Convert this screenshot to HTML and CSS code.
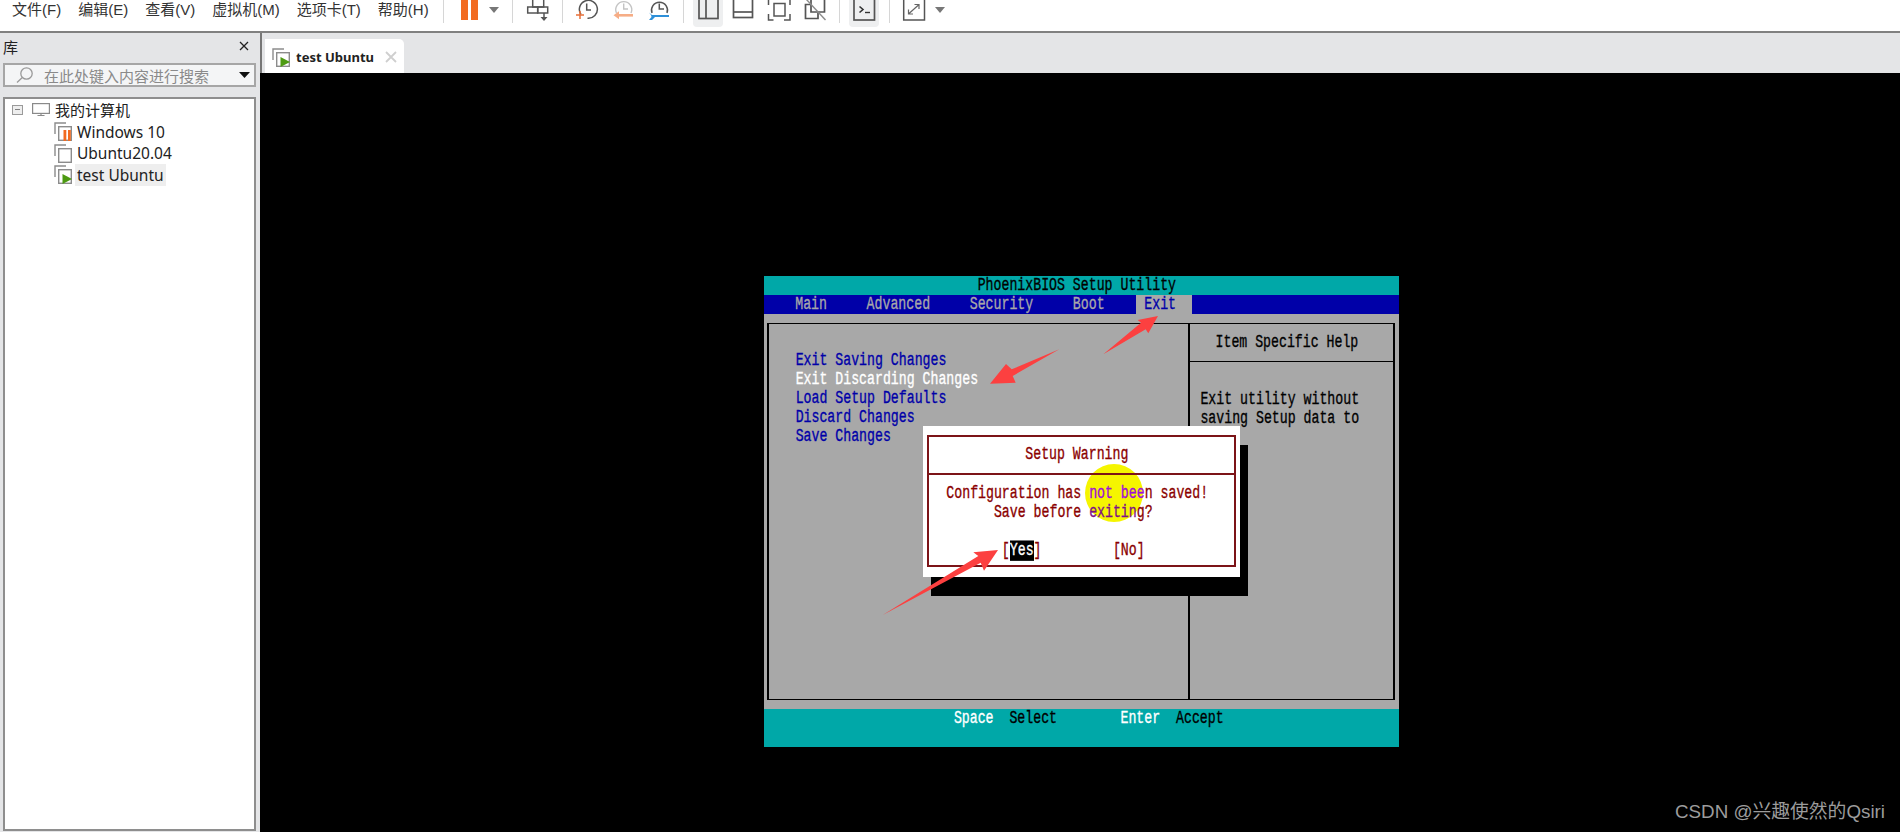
FILE: index.html
```html
<!DOCTYPE html>
<html lang="zh-CN">
<head>
<meta charset="utf-8">
<title>test Ubuntu</title>
<link rel="stylesheet" href="styles.css">
</head>
<body>
<svg class="defs" width="0" height="0" aria-hidden="true">
  <symbol id="vm" viewBox="0 0 18 19">
    <path d="M1 12V1h11" fill="none" stroke="#8c8c8c" stroke-width="1.4"/>
    <rect x="4.7" y="4.7" width="12.6" height="13.6" fill="#fff" stroke="#8c8c8c" stroke-width="1.4"/>
  </symbol>
</svg>
<div class="app">
  <header class="toolbar">
    <nav class="menu">
      <span>文件(F)</span><span>编辑(E)</span><span>查看(V)</span><span>虚拟机(M)</span><span>选项卡(T)</span><span>帮助(H)</span>
    </nav>
    <div class="tools">
      <i class="sep"></i>
      <svg class="ico ml14" viewBox="0 0 24 24"><rect x="3" y="-2" width="7" height="22" fill="#f26b21"/><rect x="13" y="-2" width="7" height="22" fill="#f26b21"/></svg>
      <svg class="caret ml7" viewBox="0 0 10 6"><path d="M0 0h10L5 6z" fill="#777"/></svg>
      <i class="sep ml13"></i>
      <svg class="ico ml13" viewBox="0 0 24 24" fill="none" stroke="#555" stroke-width="1.5"><rect x="6.7" y="-2" width="11" height="9"/><rect x="1.7" y="7" width="10" height="6"/><rect x="11.7" y="7" width="10" height="6"/><path d="M18 13v6"/><path d="M14.5 17h7L18 21z" fill="#555" stroke="none"/></svg>
      <i class="sep ml12"></i>
      <svg class="ico ml12" viewBox="0 0 24 24" fill="none" stroke="#555" stroke-width="1.5"><path d="M6 14.5A9 9 0 1 1 12.5 18.3"/><path d="M11.7 3.5V10H16"/><path d="M5 11v8M1 15h8" stroke="#e8703a"/></svg>
      <svg class="ico ml12" viewBox="0 0 24 24" fill="none" stroke="#c4c4c4" stroke-width="1.4"><path d="M5.5 13A8 8 0 1 1 20 13"/><path d="M12.7 3.5V9H17"/><path d="M22 15.3H6" stroke="#f6ad86" stroke-width="2.6"/><path d="M8 11.3 2.5 15.3 8 19.3z" fill="#f6ad86" stroke="none"/></svg>
      <svg class="ico ml12" viewBox="0 0 24 24" fill="none" stroke="#555" stroke-width="1.5"><path d="M5 13A8 8 0 1 1 20 13"/><path d="M12.3 3.5V9H17"/><path d="M2 12.5l3 2.5h17v2H8l-3 3H2l2.5-3-.5-2z" fill="#2e90d9" stroke="none"/></svg>
      <i class="sep ml12"></i>
      <span class="active ml9"><svg class="ico" viewBox="0 0 24 24" fill="none" stroke="#555" stroke-width="1.7"><rect x="3" y="-3" width="19" height="21.5" fill="#eeeff0"/><path d="M10 -3V18.5"/></svg></span>
      <svg class="ico ml8" viewBox="0 0 24 24" fill="none" stroke="#555" stroke-width="1.7"><rect x="2.5" y="-3" width="19" height="20.5"/><path d="M2.5 12h19"/></svg>
      <svg class="ico ml12" viewBox="0 0 24 24" fill="none" stroke="#555" stroke-width="1.5"><rect x="7" y="3.5" width="11" height="12.5"/><path d="M1.5 5V-1h5M17 -1h6V5M1.5 14v6h5M17 20h6v-6"/></svg>
      <svg class="ico ml12" viewBox="0 0 24 24" fill="none" stroke="#555" stroke-width="1.7"><path d="M7.5 4.5H2.5V18.5H15V13"/><path d="M8 -1H21.5V12H8z"/><path d="M3 -1 22.5 20" stroke="#8c8c8c" stroke-width="1.4"/></svg>
      <i class="sep ml12"></i>
      <span class="active ml9"><svg class="ico" viewBox="0 0 24 24" fill="none" stroke="#555" stroke-width="1.7"><rect x="2" y="-3" width="20.5" height="23" fill="#eeeff0"/><path d="M7.5 6.5 11 9.5 7.5 12.5" stroke="#333" stroke-width="1.6"/><path d="M13 12.5h5" stroke="#333" stroke-width="1.4"/></svg></span>
      <i class="sep ml10"></i>
      <svg class="ico ml12" viewBox="0 0 24 24" fill="none" stroke="#555" stroke-width="1.5"><rect x="1.7" y="-2" width="20.8" height="22"/><path d="M7 13.5 16.5 5M12.5 4.5h4.500v4.500M6.500 9.500v4.500h4.500" stroke="#666" stroke-width="1.2"/></svg>
      <svg class="caret ml9" viewBox="0 0 10 6"><path d="M0 0h10L5 6z" fill="#777"/></svg>
    </div>
  </header>

  <div class="workspace">
    <aside class="library">
      <div class="lib-head">
        <span>库</span>
        <svg class="lib-close" viewBox="0 0 10 10"><path d="M1 1l8 8M9 1l-8 8" stroke="#222" stroke-width="1.3"/></svg>
      </div>
      <div class="search">
        <svg class="search-ico" viewBox="0 0 18 16" fill="none" stroke="#9a9a9a" stroke-width="1.3"><circle cx="10.500" cy="6.500" r="5.700"/><path d="M6.300 10.500 1 15.500"/></svg>
        <span class="search-text">在此处键入内容进行搜索</span>
        <svg class="search-drop" viewBox="0 0 11 6"><path d="M0 0h11L5.500 6z" fill="#111"/></svg>
      </div>
      <div class="tree">
        <div class="node root">
          <span class="expander"></span>
          <svg class="monitor" viewBox="0 0 18 13" fill="none" stroke="#8a8a8a" stroke-width="1.200"><rect x=".6" y=".6" width="16.800" height="9.800"/><path d="M9 10.500v2M5.500 12.500h7"/></svg>
          <span>我的计算机</span>
        </div>
        <div class="node">
          <svg class="vm-ico" viewBox="0 0 18 19"><use href="#vm"/><rect x="9.500" y="8" width="2.800" height="11" fill="#f26b21"/><rect x="14" y="8" width="2.800" height="11" fill="#f26b21"/></svg>
          <span class="label">Windows 10</span>
        </div>
        <div class="node">
          <svg class="vm-ico" viewBox="0 0 18 19"><use href="#vm"/></svg>
          <span class="label">Ubuntu20.04</span>
        </div>
        <div class="node">
          <svg class="vm-ico" viewBox="0 0 18 19"><use href="#vm"/><path d="M8.500 9v10L18 14z" fill="#4d9a12"/></svg>
          <span class="label selected">test Ubuntu</span>
        </div>
      </div>
    </aside>

    <main class="main">
      <div class="tabstrip">
        <div class="tab">
          <svg class="vm-ico" viewBox="0 0 18 19"><use href="#vm"/><path d="M8.500 9v10L18 14z" fill="#4d9a12"/></svg>
          <span class="tab-title">test Ubuntu</span>
          <svg class="tab-close" viewBox="0 0 12 12"><path d="M1 1l10 10M11 1 1 11" stroke="#cfcfcf" stroke-width="1.800"/></svg>
        </div>
      </div>
      <div class="screen">
        <section class="bios">
          <div class="row title"><span class="t">                           PhoenixBIOS Setup Utility</span></div>
          <div class="row menubar"><span class="t">    Main     Advanced     Security     Boot    </span><span class="exit-tab"><span class="t"> Exit  </span></span></div>
          <div class="body">
            <div class="frame">
              <div class="pane-left">
                <div class="row item"><span class="t">Exit Saving Changes</span></div>
                <div class="row item current"><span class="t">Exit Discarding Changes</span></div>
                <div class="row item"><span class="t">Load Setup Defaults</span></div>
                <div class="row item"><span class="t">Discard Changes</span></div>
                <div class="row item"><span class="t">Save Changes</span></div>
              </div>
              <div class="pane-right">
                <div class="help-head"><span class="t">Item Specific Help</span></div>
                <div class="help-body">
                  <div class="row"><span class="t">Exit utility without</span></div>
                  <div class="row"><span class="t">saving Setup data to</span></div>
                </div>
              </div>
            </div>
          </div>
          <div class="footer">
            <div class="row"><span class="t"><span class="key">                        Space  </span>Select<span class="key">        Enter  </span>Accept</span></div>
          </div>

          <div class="dialog">
            <div class="cursor-mark"></div>
            <div class="dialog-frame">
              <div class="dialog-head"><span class="t">Setup Warning</span></div>
              <div class="dialog-body">
                <div class="row"><span class="t">  Configuration has <span class="over">not bee</span>n saved!</span></div>
                <div class="row"><span class="t">        Save before <span class="over-dark">exitin</span>g?</span></div>
                <div class="row"></div>
                <div class="row"><span class="t">         [<span class="focus">Yes</span>]         [No]</span></div>
              </div>
            </div>
          </div>
        </section>
      </div>
    </main>
  </div>
</div>

<svg class="annotations" viewBox="0 0 1900 832" aria-hidden="true">
  <path d="M1103.300 354.300 1141 322.700 1137.700 320 1158 316 1148.300 333.300 1145.700 329.300z"/>
  <path d="M1059.300 349.300 1011.700 369.300 1006 364 990 383.700 1015.700 382.700 1012.700 376z"/>
  <path d="M882.700 615 978.300 556 973.300 552.300 998 550 984 570.700 980.700 562.700z"/>
</svg>
<div class="watermark">CSDN @兴趣使然的Qsiri</div>
</body>
</html>
```

FILE: styles.css
```css
* { box-sizing: border-box; }
html, body { margin: 0; padding: 0; background: #000; }
body {
  width: 1900px;
  height: 832px;
  overflow: hidden;
  position: relative;
  font-family: "Noto Sans", "Noto Sans CJK SC", sans-serif;
  font-size: 15px;
  color: #222;
}
.defs { position: absolute; }
.app { display: flex; flex-direction: column; height: 832px; }

/* toolbar */
.toolbar {
  height: 33px;
  flex: none;
  display: flex;
  background: #fff;
  border-bottom: 2px solid #808080;
  overflow: hidden;
}
.menu {
  display: flex;
  gap: 17px;
  padding: 1px 0 0 12px;
  width: 443px;
  flex: none;
  line-height: 18px;
  font-family: "Liberation Sans", "Noto Sans CJK SC", sans-serif;
  white-space: nowrap;
  color: #333;
}
.tools { display: flex; align-items: flex-start; }
.sep { display: block; width: 1px; height: 23px; background: #d6d6d6; flex: none; }
.ico { display: block; width: 24px; height: 24px; flex: none; overflow: visible; }
.caret { display: block; width: 10px; height: 6px; margin-top: 7px; flex: none; }
.active {
  display: block;
  width: 30px;
  height: 27px;
  padding: 0 3px;
  background: #eeeff0;
  border-radius: 0 0 4px 4px;
  flex: none;
}
.ml7 { margin-left: 7px; }
.ml8 { margin-left: 8px; }
.ml9 { margin-left: 9px; }
.ml10 { margin-left: 10px; }
.ml12 { margin-left: 12px; }
.ml13 { margin-left: 13px; }
.ml14 { margin-left: 14px; }

/* layout */
.workspace { flex: 1; display: flex; min-height: 0; }

/* library */
.library {
  width: 260px;
  flex: none;
  display: flex;
  flex-direction: column;
  background: #e4e5e7;
  padding: 0 4px 1px 3px;
}
.lib-head {
  height: 30px;
  flex: none;
  display: flex;
  align-items: center;
  justify-content: space-between;
  padding: 0 7px 4px 0;
  font-family: "Noto Sans CJK SC", sans-serif;
}
.lib-close { width: 10px; height: 10px; }
.search {
  height: 24px;
  flex: none;
  display: flex;
  align-items: center;
  background: #f4f5f6;
  border: 2px solid #a6a6a6;
  padding-left: 11px;
  margin-bottom: 10px;
}
.search-ico { width: 18px; height: 16px; flex: none; }
.search-text {
  margin-left: 10px;
  flex: 1;
  color: #8a8a8a;
  font-family: "Noto Sans CJK SC", sans-serif;
  white-space: nowrap;
}
.search-drop { width: 11px; height: 6px; margin-right: 4px; flex: none; }
.tree {
  flex: 1;
  background: #fff;
  border: 2px solid #8e8e8e;
  padding: 0.500px 0 0 0;
}
.node {
  height: 21.500px;
  display: flex;
  align-items: center;
  padding-left: 49px;
  white-space: nowrap;
}
.node.root {
  padding: 0 0 1.500px 7px;
  font-family: "Noto Sans CJK SC", sans-serif;
}
.expander {
  width: 11px;
  height: 10px;
  background: linear-gradient(#808080, #808080) center / 5px 1px no-repeat #eeeeee;
  border: 1px solid #9a9a9a;
  flex: none;
}
.monitor { width: 18px; height: 13px; margin: 0 5px 0 9px; flex: none; }
.vm-ico { width: 18px; height: 19px; flex: none; }
.label {
  margin-left: 3px;
  padding: 0 2px;
  line-height: 22px;
  font-size: 15.500px;
}
.selected { background: #eeeeee; }

/* main */
.main { flex: 1; display: flex; flex-direction: column; min-width: 0; }
.tabstrip {
  height: 40px;
  flex: none;
  background: #e4e5e7;
  border-left: 2px solid #777;
  padding: 6px 0 0 3px;
}
.tab {
  width: 139px;
  height: 34px;
  background: #fff;
  border-radius: 0 5px 0 0;
  display: flex;
  align-items: center;
  padding: 2px 0 0 7px;
}
.tab-title { margin-left: 6px; font-size: 13px; font-weight: 700; color: #222; white-space: nowrap; }
.tab-close { width: 12px; height: 12px; margin-left: 11px; flex: none; }
.screen {
  flex: 1;
  background: #000;
  display: flex;
  justify-content: center;
  align-items: flex-start;
  padding: 203px 0 0 2px;
}

/* BIOS text-mode screen: 80 cols of 7.94px, 25 rows of 18.84px */
.bios {
  position: relative;
  width: 635px;
  height: 471px;
  flex: none;
  display: flex;
  flex-direction: column;
  background: #a8a8a8;
  font-family: "Liberation Mono", monospace;
  font-size: 13.233px;
  line-height: 18.840px;
  color: #000;
}
.row { height: 18.840px; }
.t {
  display: inline-block;
  vertical-align: top;
  white-space: pre;
  transform: translateY(1.500px) scaleY(1.36);
  -webkit-text-stroke: 0.250px currentColor;
}
.title { background: #00a8a8; }
.menubar { background: #0000a8; color: #a8a8a8; }
.exit-tab { display: inline-block; vertical-align: top; height: 18.840px; background: #a8a8a8; color: #0000a8; }
.body { flex: 1; padding: 9.420px 3.970px; min-height: 0; }
.frame { height: 100%; display: flex; border: solid #000; border-width: 1px 2px; }
.pane-left { flex: 1; padding: 27.260px 0 0 3.300ch; color: #0000a8; }
.current { color: #fff; }
.pane-right { width: 204.400px; flex: none; border-left: 2px solid #000; display: flex; flex-direction: column; }
.help-head { height: 37.680px; flex: none; padding: 9.420px 0 0 3.200ch; border-bottom: 1px solid #000; }
.help-body { padding: 28.260px 0 0 1.300ch; }
.footer { height: 37.680px; flex: none; background: #00a8a8; }
.key { color: #fff; }

.dialog {
  position: absolute;
  left: 159px;
  top: 150px;
  width: 317px;
  height: 151px;
  background: #fff;
  box-shadow: 8px 19px 0 #000;
  padding: 9px 4px 0;
  color: #8a0000;
}
.cursor-mark {
  position: absolute;
  left: 162px;
  top: 38px;
  width: 58px;
  height: 58px;
  border-radius: 50%;
  background: #f5f500;
}
.dialog-frame { position: relative; height: 132px; border: 2px solid #7c1418; }
.dialog-head { height: 38px; padding: 7.500px 0 0 12.200ch; border-bottom: 2px solid #7c1418; }
.dialog-body { padding: 9.420px 0 0 0.250ch; }
.over { color: #a010d8; }
.over-dark { color: #7e1088; }
.focus { background: #000; color: #fff; }

/* annotations over the picture */
.annotations { position: absolute; left: 0; top: 0; width: 1900px; height: 832px; pointer-events: none; }
.annotations path { fill: #fc4040; }
.watermark {
  position: absolute;
  right: 15px;
  top: 800px;
  font-family: "Liberation Sans", "Noto Sans CJK SC", sans-serif;
  font-size: 18.800px;
  line-height: 24px;
  color: #9c9c9c;
  white-space: nowrap;
}
```
